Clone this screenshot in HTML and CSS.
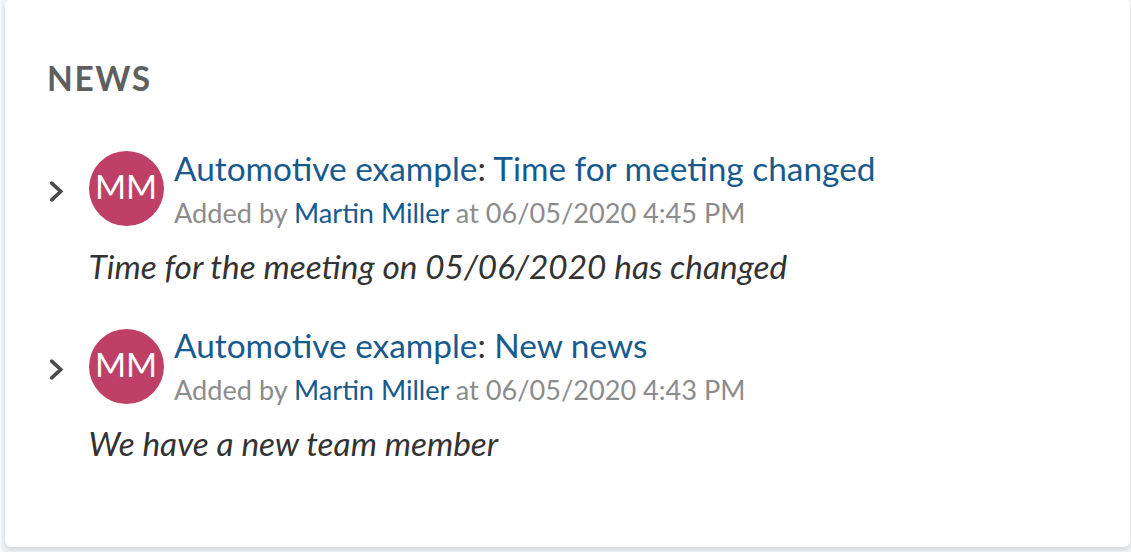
FILE: index.html
```html
<!DOCTYPE html>
<html lang="en">
<head>
<meta charset="utf-8">
<title>News</title>
<link rel="stylesheet" href="styles.css">
</head>
<body>
<section class="widget">
  <h2 class="widget-title">NEWS</h2>
  <article class="news-item">
    <svg class="chevron" viewBox="0 0 18 24"><path d="M4.7 4.2l9 8.3-9 8.3"/></svg>
    <div class="avatar">MM</div>
    <div class="details">
      <div class="headline"><a>Automotive example</a>: <a>Time for meeting changed</a></div>
      <div class="meta">Added by <a>Martin Miller</a> at 06/05/2020 4:45 PM</div>
    </div>
    <p class="summary">Time for the meeting on 05/06/2020 has changed</p>
  </article>
  <article class="news-item">
    <svg class="chevron" viewBox="0 0 18 24"><path d="M4.7 4.2l9 8.3-9 8.3"/></svg>
    <div class="avatar">MM</div>
    <div class="details">
      <div class="headline"><a>Automotive example</a>: <a>New news</a></div>
      <div class="meta">Added by <a>Martin Miller</a> at 06/05/2020 4:43 PM</div>
    </div>
    <p class="summary">We have a new team member</p>
  </article>
</section>
</body>
</html>
```
FILE: styles.css
```css
* { box-sizing: border-box; }
body {
  margin: 0;
  height: 552px;
  overflow: hidden;
  background: linear-gradient(90deg, #fafcfd 0, #eef2f4 2px);
  font-family: Lato, sans-serif;
  color: #333;
}
.widget {
  height: 547px;
  margin: 0 1px 0 5px;
  padding: 57px 42px 0;
  background: #fff;
  border-radius: 4px 4px 6px 6px;
  box-shadow: 0 3px 4px rgba(0, 0, 0, .1);
}
.widget-title {
  margin: 0 0 52px;
  font-size: 33.5px;
  line-height: 42px;
  font-weight: 700;
  letter-spacing: 1.6px;
  color: #5f5f5f;
}
.news-item {
  display: grid;
  grid-template-columns: 41.5px 75px 1fr;
  grid-template-rows: 75px 81px;
  height: 177.5px;
  white-space: nowrap;
}
.chevron {
  width: 18px;
  height: 24px;
  margin-top: 28px;
  fill: none;
  stroke: #4b4b4b;
  stroke-width: 3.7;
  stroke-linecap: round;
}
.avatar {
  width: 75px;
  height: 75px;
  border-radius: 50%;
  background: #bf4066;
  color: #fff;
  font-size: 33.5px;
  line-height: 71.4px;
  text-align: center;
}
.details { padding-left: 10.5px; }
.headline {
  font-size: 33.38px;
  line-height: 44px;
  margin-top: -5.3px;
}
.meta {
  font-size: 27.14px;
  line-height: 45px;
  color: #8c8c8c;
}
a { color: #175a8e; }
.summary {
  grid-column: 2 / 4;
  margin: 17.5px 0 0;
  font-size: 33.38px;
  line-height: 44px;
  font-style: italic;
}
```
